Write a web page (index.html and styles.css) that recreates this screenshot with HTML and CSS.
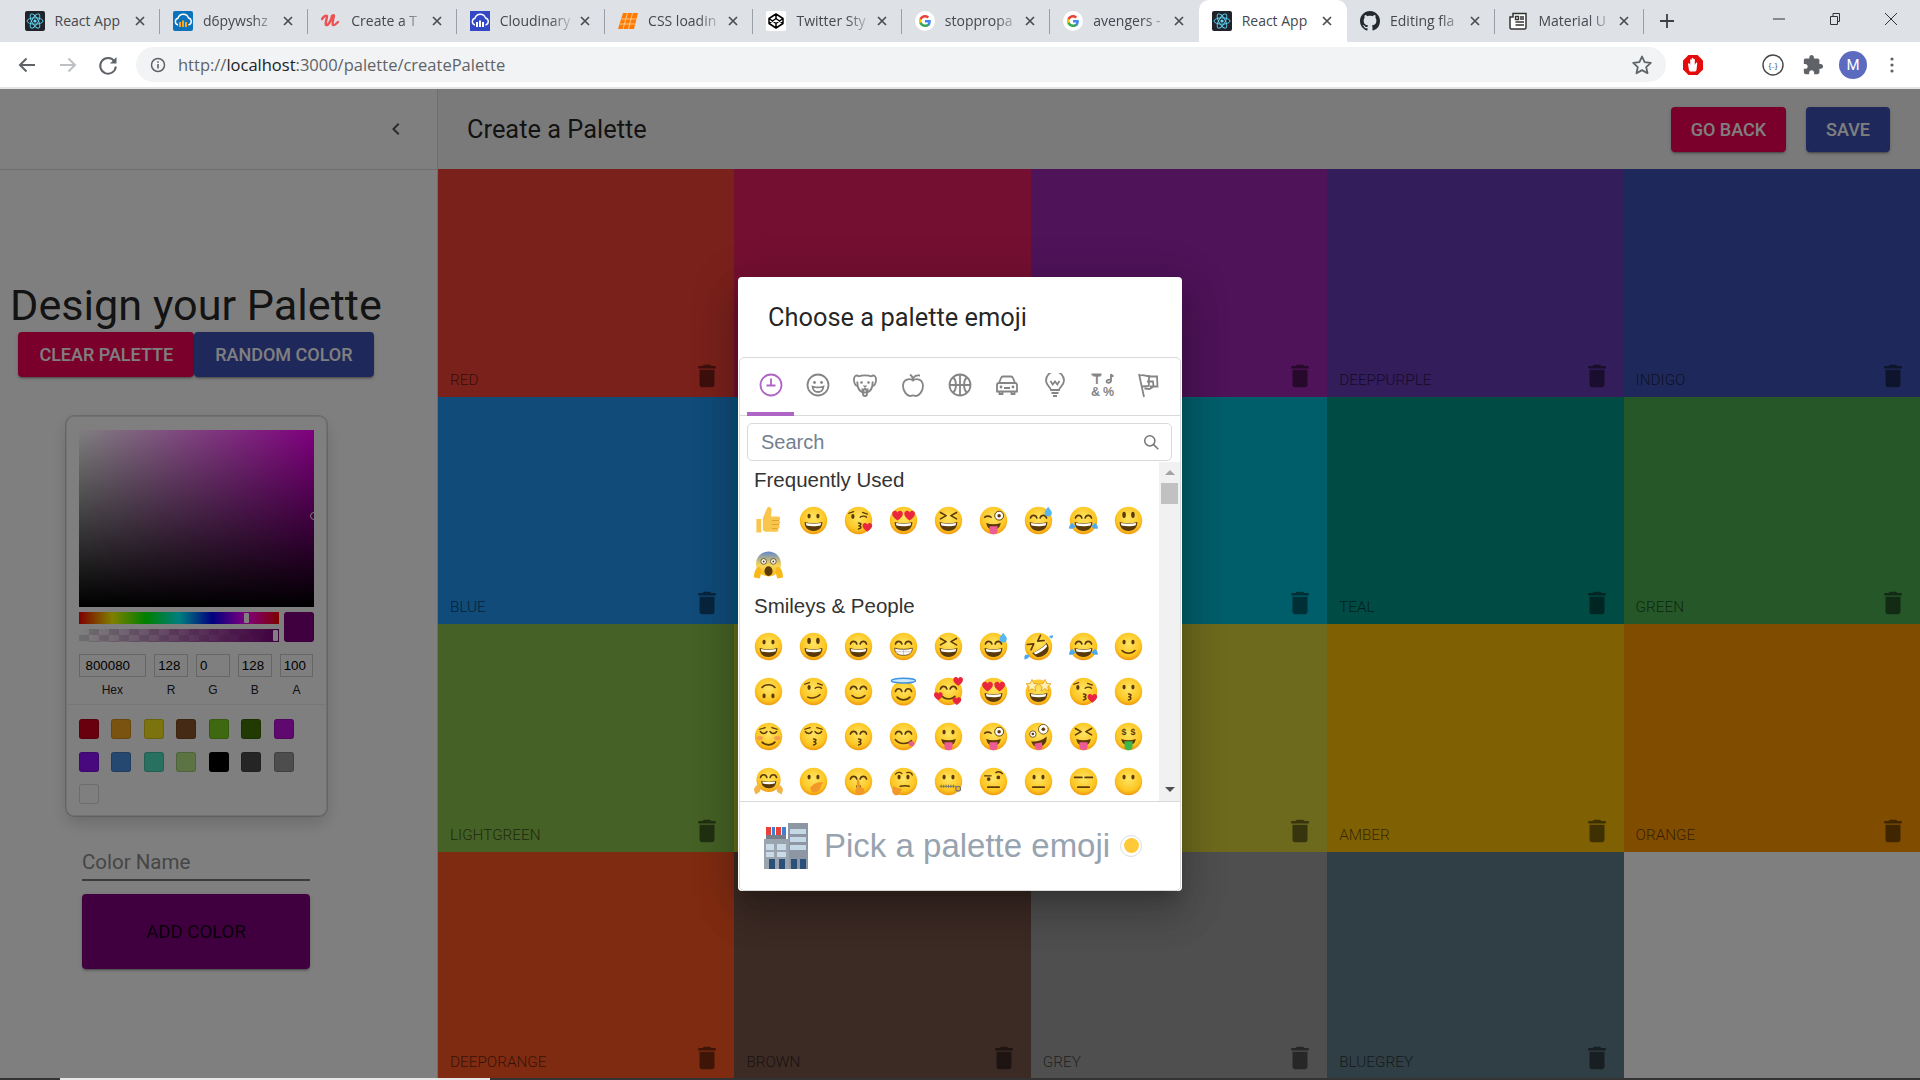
FILE: index.html
```html
<!DOCTYPE html>
<html lang="en">
<head>
<meta charset="utf-8">
<title>React App</title>
<link rel="stylesheet" href="styles.css">
</head>
<body>
<svg class="defs" aria-hidden="true">
  <defs>
    <radialGradient id="fg" cx=".5" cy=".4" r=".62"><stop offset="0" stop-color="#ffe563"/><stop offset=".72" stop-color="#fcc521"/><stop offset="1" stop-color="#ee930c"/></radialGradient>
    <linearGradient id="sg" x1="0" y1="0" x2="0" y2="1"><stop offset="0" stop-color="#5f86c9"/><stop offset=".55" stop-color="#f6d55a"/><stop offset="1" stop-color="#f9b81a"/></linearGradient>
    <path id="hp" d="M6 11C2 8 0 6 0 3.300 0 1 1.800 0 3 0c1.300 0 2.400.7 3 2 .6-1.300 1.700-2 3-2 1.200 0 3 1 3 3.300C12 6 10 8 6 11z" fill="#e8263d"/>
  </defs>
  <symbol id="b" viewBox="0 0 36 36"><circle cx="18" cy="18" r="17" fill="url(#fg)"/></symbol>
  <g id="eo" fill="#5b3a0a"><ellipse cx="12.500" cy="12.500" rx="2" ry="3"/><ellipse cx="23.500" cy="12.500" rx="2" ry="3"/></g>
  <g id="el" fill="#5b3a0a"><ellipse cx="12.500" cy="11" rx="2.200" ry="4"/><ellipse cx="23.500" cy="11" rx="2.200" ry="4"/></g>
  <path id="eh" d="M8 15c1.500-4.500 6.500-4.500 8 0M20 15c1.500-4.500 6.500-4.500 8 0" fill="none" stroke="#5b3a0a" stroke-width="2" stroke-linecap="round"/>
  <path id="ex" d="M8 8l7 4-7 4M28 8l-7 4 7 4" fill="none" stroke="#5b3a0a" stroke-width="2" stroke-linecap="round" stroke-linejoin="round"/>
  <path id="ec" d="M8 12c2 3 6 3 8 0M20 12c2 3 6 3 8 0" fill="none" stroke="#5b3a0a" stroke-width="2" stroke-linecap="round"/>
  <g id="mg"><path d="M7 20c7 2 15 2 22 0 0 7-4 11-11 11S7 27 7 20z" fill="#5b3a0a"/><path d="M8.500 21c6 1.300 13 1.300 19 0l-.8 3.200c-5 1.300-12.400 1.300-17.400 0z" fill="#fff"/></g>
  <path id="ms" d="M10 23c4 4.500 12 4.500 16 0" fill="none" stroke="#5b3a0a" stroke-width="2" stroke-linecap="round"/>
  <path id="mk" d="M18 21c4 0 4 3 0 3.500 4 .5 4 3.500 0 4" fill="none" stroke="#5b3a0a" stroke-width="1.800" stroke-linecap="round"/>
  <g id="mt"><path d="M9 21c6 2 12 2 18 0-1 6-4 8-9 8s-8-2-9-8z" fill="#5b3a0a"/><path d="M13 25h10v5a5 5 0 0 1-10 0z" fill="#ee5a94"/></g>
  <path id="mn" d="M11 25h14" fill="none" stroke="#5b3a0a" stroke-width="2.200" stroke-linecap="round"/>
  <path id="dr" d="M30 1c2 3 4.500 5 4.500 7.500a4.500 4.500 0 0 1-9 0C25.500 6 28 4 30 1z" fill="#58b6f0"/>
  <path id="tr" d="M4 21c-3 1-4 5-4 7 3 1 6 0 8-3zM32 21c3 1 4 5 4 7-3 1-6 0-8-3z" fill="#4fa9ee"/>
  <symbol id="e-thumb" viewBox="0 0 36 36"><path d="M11 15L16 3c1-3 6-2 6 2l-1 8h9c3 0 3 4 1 5 2 1 2 4 0 5 1 1 1 4-1 5 1 2 0 4-2 4H15c-2 0-4-1-4-3zM3 16h6v17H3z" fill="#f9c64d"/><path d="M22 18h9M22 23h9M22 28h7" stroke="#d99a2a" stroke-width="1" fill="none"/></symbol>
  <symbol id="e-grin" viewBox="0 0 36 36"><use href="#b"/><use href="#eo"/><use href="#mg"/></symbol>
  <symbol id="e-smiley" viewBox="0 0 36 36"><use href="#b"/><use href="#el"/><use href="#mg"/></symbol>
  <symbol id="e-smile" viewBox="0 0 36 36"><use href="#b"/><use href="#eh"/><use href="#mg"/></symbol>
  <symbol id="e-beam" viewBox="0 0 36 36"><use href="#b"/><use href="#eh"/><path d="M7 20c7 2 15 2 22 0 0 6-4 9-11 9S7 26 7 20z" fill="#fff" stroke="#5b3a0a" stroke-width="1"/><path d="M8 24.500h20M18 21v8" stroke="#a99" stroke-width=".7"/></symbol>
  <symbol id="e-xd" viewBox="0 0 36 36"><use href="#b"/><use href="#ex"/><use href="#mg"/></symbol>
  <symbol id="e-sweat" viewBox="0 0 36 36"><use href="#b"/><use href="#eh"/><use href="#mg"/><use href="#dr"/></symbol>
  <symbol id="e-rofl" viewBox="0 0 36 36"><use href="#b"/><g transform="rotate(-35 18 18)"><use href="#ex"/><use href="#mg"/></g><path d="M2 28c-2 2-2 5-1 6 3 0 5-2 6-5zM34 8c2-1 2-2 2-4-3 0-4 1-5 2z" fill="#4fa9ee"/></symbol>
  <symbol id="e-joy" viewBox="0 0 36 36"><use href="#b"/><use href="#eh"/><use href="#mg"/><use href="#tr"/></symbol>
  <symbol id="e-slight" viewBox="0 0 36 36"><use href="#b"/><use href="#eo"/><use href="#ms"/></symbol>
  <symbol id="e-upside" viewBox="0 0 36 36"><use href="#b"/><g transform="rotate(180 18 18)"><use href="#eo"/><use href="#ms"/></g></symbol>
  <symbol id="e-wink" viewBox="0 0 36 36"><use href="#b"/><ellipse cx="12.500" cy="13" rx="2" ry="3" fill="#5b3a0a"/><path d="M20 14c2-2 6-2 8 0M7 9l6-2M23 8l6 2" fill="none" stroke="#5b3a0a" stroke-width="1.600" stroke-linecap="round"/><path d="M11 25c4 2 11 1 15-3" fill="none" stroke="#5b3a0a" stroke-width="2" stroke-linecap="round"/></symbol>
  <symbol id="e-blush" viewBox="0 0 36 36"><use href="#b"/><use href="#eh"/><use href="#ms"/></symbol>
  <symbol id="e-halo" viewBox="0 0 36 36"><circle cx="18" cy="20" r="15.500" fill="url(#fg)"/><use href="#eh" transform="translate(0 3)"/><use href="#ms" transform="translate(0 2)"/><ellipse cx="18" cy="4.500" rx="15" ry="3" fill="#cfeaff" stroke="#3f94e0" stroke-width="1.800"/></symbol>
  <symbol id="e-love" viewBox="0 0 36 36"><use href="#b"/><use href="#eh"/><use href="#ms" transform="translate(0 1)"/><use href="#hp" transform="translate(24 0)"/><use href="#hp" transform="translate(0 19) scale(.9)"/><use href="#hp" transform="translate(23 25) scale(.9)"/></symbol>
  <symbol id="e-hearts" viewBox="0 0 36 36"><use href="#b"/><use href="#hp" transform="translate(4 6) scale(1.100)"/><use href="#hp" transform="translate(19 6) scale(1.100)"/><use href="#mg"/></symbol>
  <symbol id="e-star" viewBox="0 0 36 36"><circle cx="18" cy="19" r="16" fill="url(#fg)"/><use href="#mg"/><path d="M10 3l2.200 5 5.300.5-4 3.500 1.200 5.500-4.700-3-4.700 3 1.200-5.500-4-3.500 5.300-.5zM26 3l2.200 5 5.300.5-4 3.500 1.200 5.500-4.700-3-4.700 3 1.200-5.500-4-3.500 5.300-.5z" fill="#fdf0b4" stroke="#e89a12" stroke-width="1"/></symbol>
  <symbol id="e-kheart" viewBox="0 0 36 36"><use href="#b"/><ellipse cx="11" cy="13" rx="2" ry="3" fill="#5b3a0a"/><path d="M20 14c2-2 6-2 8 0M6 9l6-2M23 8l6 2" fill="none" stroke="#5b3a0a" stroke-width="1.600" stroke-linecap="round"/><use href="#mk"/><use href="#hp" transform="translate(23 21)"/></symbol>
  <symbol id="e-kiss" viewBox="0 0 36 36"><use href="#b"/><use href="#eo"/><use href="#mk"/></symbol>
  <symbol id="e-relax" viewBox="0 0 36 36"><use href="#b"/><path d="M7 9l7-2M22 7l7 2" fill="none" stroke="#5b3a0a" stroke-width="1.400" stroke-linecap="round"/><use href="#ec"/><use href="#ms" transform="translate(0 2)"/><ellipse cx="7" cy="20" rx="4" ry="2.500" fill="#f79c4c"/><ellipse cx="29" cy="20" rx="4" ry="2.500" fill="#f79c4c"/></symbol>
  <symbol id="e-kclosed" viewBox="0 0 36 36"><use href="#b"/><path d="M7 9l7-2M22 7l7 2" fill="none" stroke="#5b3a0a" stroke-width="1.400" stroke-linecap="round"/><use href="#ec"/><use href="#mk"/></symbol>
  <symbol id="e-ksmile" viewBox="0 0 36 36"><use href="#b"/><use href="#eh"/><use href="#mk"/></symbol>
  <symbol id="e-yum" viewBox="0 0 36 36"><use href="#b"/><use href="#eh"/><path d="M8 22c5 6 15 6 20 1" fill="none" stroke="#5b3a0a" stroke-width="2" stroke-linecap="round"/><ellipse cx="28" cy="27" rx="3.500" ry="3" fill="#ee5a94"/></symbol>
  <symbol id="e-tongue" viewBox="0 0 36 36"><use href="#b"/><use href="#eo"/><use href="#mt"/></symbol>
  <symbol id="e-wtongue" viewBox="0 0 36 36"><use href="#b"/><path d="M7 14c2-2 6-2 8 0" fill="none" stroke="#5b3a0a" stroke-width="2" stroke-linecap="round"/><circle cx="25" cy="12" r="5.500" fill="#fff" stroke="#5b3a0a" stroke-width="1.200"/><circle cx="25" cy="12" r="2.200" fill="#5b3a0a"/><use href="#mt"/></symbol>
  <symbol id="e-zany" viewBox="0 0 36 36"><use href="#b"/><circle cx="11" cy="15" r="4" fill="#fff" stroke="#5b3a0a"/><circle cx="11" cy="15" r="1.600" fill="#5b3a0a"/><circle cx="24" cy="9" r="6" fill="#fff" stroke="#5b3a0a"/><circle cx="24" cy="9" r="2.200" fill="#5b3a0a"/><path d="M9 24c6 1 14-1 19-6 1 8-4 12-9 13-6 1-9-3-10-7z" fill="#5b3a0a"/><path d="M13 27l9-2 1 6c0 4-8 5-9 1z" fill="#ee5a94"/></symbol>
  <symbol id="e-stongue" viewBox="0 0 36 36"><use href="#b"/><use href="#ex"/><use href="#mt"/></symbol>
  <symbol id="e-money" viewBox="0 0 36 36"><use href="#b"/><path d="M9 21c6 2 12 2 18 0-1 6-4 7-9 7s-8-1-9-7z" fill="#5b3a0a"/><path d="M13 24h10v6a5 5 0 0 1-10 0z" fill="#3fb54a"/></symbol>
  <symbol id="e-hug" viewBox="0 0 36 36"><circle cx="18" cy="16" r="15" fill="url(#fg)"/><use href="#eh" transform="translate(0 -2)"/><use href="#mg" transform="translate(3 0) scale(.85)"/><path d="M0 29c0-5 5-8 7-5 2 2 1 5 0 7l-5 3zM36 29c0-5-5-8-7-5-2 2-1 5 0 7l5 3z" fill="#f4b44a"/></symbol>
  <symbol id="e-hand" viewBox="0 0 36 36"><use href="#b"/><use href="#eo"/><path d="M14 26c3-5 9-8 15-7 2 1 0 3-2 3 2 2 0 3-1 4 0 3-2 4-4 5-4 2-7 0-8-5z" fill="#f0982a"/></symbol>
  <symbol id="e-shush" viewBox="0 0 36 36"><use href="#b"/><use href="#eh"/><ellipse cx="18" cy="24" rx="3" ry="2" fill="#5b3a0a"/><path d="M16 17c0-2 3-2 3 0l1 8c3 0 6 2 5 5-1 5-8 6-10 2-2-3 0-5 1-7z" fill="#f0982a"/></symbol>
  <symbol id="e-think" viewBox="0 0 36 36"><use href="#b"/><path d="M8 9c2-3 6-3 8-1M22 7c3-1 6 0 7 3" fill="none" stroke="#5b3a0a" stroke-width="1.600" stroke-linecap="round"/><use href="#eo"/><path d="M14 24c4-1 8-1 11 0" fill="none" stroke="#5b3a0a" stroke-width="2" stroke-linecap="round"/><path d="M6 24c2 2 6 2 9 3 2 1 0 3-1 3 0 3-2 6-6 5-4-2-5-6-3-10z" fill="#f0982a"/></symbol>
  <symbol id="e-zip" viewBox="0 0 36 36"><use href="#b"/><use href="#eo"/><path d="M7 24h21M9 22v4M12 22v4M15 22v4M18 22v4M21 22v4M24 22v4" stroke="#6a6a6a" stroke-width="1" fill="none"/><circle cx="30" cy="27" r="3" fill="none" stroke="#777" stroke-width="1.500"/></symbol>
  <symbol id="e-brow" viewBox="0 0 36 36"><use href="#b"/><path d="M7 11h8M21 7c3-2 6-1 8 1" fill="none" stroke="#5b3a0a" stroke-width="1.800" stroke-linecap="round"/><circle cx="12" cy="15" r="2.300" fill="#5b3a0a"/><circle cx="24" cy="13" r="2.300" fill="#5b3a0a"/><use href="#mn"/></symbol>
  <symbol id="e-neutral" viewBox="0 0 36 36"><use href="#b"/><use href="#eo"/><use href="#mn"/></symbol>
  <symbol id="e-expr" viewBox="0 0 36 36"><use href="#b"/><path d="M7 13h9M20 13h9" fill="none" stroke="#5b3a0a" stroke-width="2.200" stroke-linecap="round"/><use href="#mn"/></symbol>
  <symbol id="e-nomouth" viewBox="0 0 36 36"><use href="#b"/><use href="#eo"/></symbol>
  <symbol id="e-scream" viewBox="0 0 36 36"><circle cx="18" cy="16" r="15.500" fill="url(#sg)"/><circle cx="12" cy="13" r="3.500" fill="#fff" stroke="#5b3a0a"/><circle cx="24" cy="13" r="3.500" fill="#fff" stroke="#5b3a0a"/><circle cx="12" cy="13" r="1.200" fill="#5b3a0a"/><circle cx="24" cy="13" r="1.200" fill="#5b3a0a"/><ellipse cx="18" cy="25" rx="5" ry="6" fill="#5b3a0a"/><path d="M0 33c0-8 3-13 7-13 3 2 2 9 0 14zM36 33c0-8-3-13-7-13-3 2-2 9 0 14z" fill="#f9b81a"/></symbol>
  <symbol id="e-store" viewBox="0 0 44 46"><rect x="24" y="0" width="20" height="46" fill="#8c97a3"/><path d="M26 6h16v5H26zM26 14h16v5H26zM26 22h16v5H26z" fill="#c4d8e8"/><path d="M27 36h6v10h-6zM36 36h6v10h-6z" fill="#2a4f78"/><rect x="0" y="16" width="25" height="30" fill="#9aa4ae"/><path d="M2 21h8v6H2zM13 21h9v6h-9zM2 29h8v5H2zM13 29h9v5h-9z" fill="#c9dbe9"/><path d="M5 36h6v10H5zM15 36h6v10h-6z" fill="#2a4f78"/><rect x="2" y="4" width="20" height="8" fill="#fff"/><path d="M2 4h5v8H2zM12 4h5v8h-5z" fill="#e8413a"/><path d="M8 4h3v8H8zM18 4h4v8h-4z" fill="#3f7fd0"/><rect x="2" y="12" width="20" height="4" fill="#747f8a"/></symbol>
  <symbol id="react" viewBox="0 0 20 20"><rect width="20" height="20" rx="2" fill="#20232a"/><g fill="none" stroke="#61dafb" stroke-width=".9"><ellipse cx="10" cy="10" rx="8" ry="3.200"/><ellipse cx="10" cy="10" rx="8" ry="3.200" transform="rotate(60 10 10)"/><ellipse cx="10" cy="10" rx="8" ry="3.200" transform="rotate(120 10 10)"/></g><circle cx="10" cy="10" r="1.600" fill="#61dafb"/></symbol>
  <symbol id="cloudbars" viewBox="0 0 20 20"><path d="M5 14a3.500 3.500 0 0 1 0-6.800A5.500 5.500 0 0 1 15.500 7a3.600 3.600 0 0 1 0 7" fill="none" stroke="#fff" stroke-width="1.400"/><path d="M6 11h2v5H6zM9 9.500h2V16H9zM12 11h2v5h-2z" fill="currentColor"/></symbol>
  <symbol id="google" viewBox="0 0 20 20"><circle cx="10" cy="10" r="10" fill="#fff"/><path d="M15.800 10.200c0-.5 0-.9-.1-1.300H10v2.500h3.300c-.2.800-.6 1.400-1.200 1.900v1.600h2c1.100-1.100 1.700-2.700 1.700-4.700z" fill="#4285f4"/><path d="M10 16c1.600 0 3-.5 4.100-1.500l-2-1.600c-.6.400-1.300.6-2.100.6-1.600 0-3-1.100-3.500-2.500h-2V12.600C5.500 14.700 7.600 16 10 16z" fill="#34a853"/><path d="M6.500 11c-.3-.7-.3-1.400 0-2.100V7.300h-2c-.7 1.500-.7 3.800 0 5.300z" fill="#fbbc05"/><path d="M10 6.500c.9 0 1.700.3 2.400.9l1.700-1.700C13 4.600 11.600 4 10 4 7.600 4 5.500 5.300 4.500 7.300l2 1.600C7 7.600 8.400 6.500 10 6.500z" fill="#ea4335"/></symbol>
  <symbol id="x" viewBox="0 0 10 10"><path d="M1 1l8 8M9 1l-8 8" stroke="#4a4d52" stroke-width="1.700" fill="none"/></symbol>
  <symbol id="trash" viewBox="0 0 24 24"><path d="M6 19c0 1.100.9 2 2 2h8c1.100 0 2-.9 2-2V7H6v12zM19 4h-3.500l-1-1h-5l-1 1H5v2h14V4z"/></symbol>
</svg>

<header class="chrome">
  <div class="tabstrip">
    <div class="tab sep"><svg class="fav"><use href="#react"/></svg><span class="tab-title tab-title-full">React App</span><svg class="tab-x"><use href="#x"/></svg></div>
    <div class="tab sep"><svg class="fav fav-cl1" viewBox="0 0 20 20"><rect width="20" height="20" rx="2" fill="#0c72ba"/><use href="#cloudbars" width="20" height="20"/></svg><span class="tab-title">d6pywshz</span><svg class="tab-x"><use href="#x"/></svg></div>
    <div class="tab sep"><svg class="fav" viewBox="0 0 20 20"><path d="M1 8c2-3 4-4 5-3 0 3-2 6-1 9 2 1 5-4 6-9 1-1 2-1 2 0-1 4-2 7-1 9 1 1 3-1 5-3" fill="none" stroke="#ec5252" stroke-width="2.400" stroke-linecap="round"/></svg><span class="tab-title">Create a T</span><svg class="tab-x"><use href="#x"/></svg></div>
    <div class="tab sep"><svg class="fav fav-cl2" viewBox="0 0 20 20"><rect width="20" height="20" fill="#3448c5"/><use href="#cloudbars" width="20" height="20"/></svg><span class="tab-title">Cloudinary</span><svg class="tab-x"><use href="#x"/></svg></div>
    <div class="tab sep"><svg class="fav" viewBox="0 0 20 20"><path d="M5 2h15l-4 16H0z" fill="#ff7a00"/><path d="M9.500 2L5 18M14.500 2L10.500 18M3.500 8h15M2 13h15" stroke="#ffd9a8" stroke-width=".8" fill="none"/></svg><span class="tab-title">CSS loadin</span><svg class="tab-x"><use href="#x"/></svg></div>
    <div class="tab sep"><svg class="fav" viewBox="0 0 20 20"><rect width="20" height="20" rx="2" fill="#fff"/><path d="M10 3l7 4.500v5L10 17l-7-4.500v-5zM10 3v4.500M10 12.500V17M3 7.500l7 5 7-5M3 12.500l7-5 7 5" fill="none" stroke="#000" stroke-width="1.500" stroke-linejoin="round"/></svg><span class="tab-title">Twitter Sty</span><svg class="tab-x"><use href="#x"/></svg></div>
    <div class="tab sep"><svg class="fav"><use href="#google"/></svg><span class="tab-title">stoppropa</span><svg class="tab-x"><use href="#x"/></svg></div>
    <div class="tab"><svg class="fav"><use href="#google"/></svg><span class="tab-title">avengers -</span><svg class="tab-x"><use href="#x"/></svg></div>
    <div class="tab active"><svg class="fav"><use href="#react"/></svg><span class="tab-title tab-title-full">React App</span><svg class="tab-x"><use href="#x"/></svg></div>
    <div class="tab sep"><svg class="fav" viewBox="0 0 16 16"><path fill="#24292e" d="M8 0C3.580 0 0 3.580 0 8c0 3.540 2.290 6.530 5.470 7.590.4.070.55-.17.55-.38 0-.19-.01-.82-.01-1.490-2.010.37-2.530-.49-2.690-.94-.09-.23-.48-.94-.82-1.130-.28-.15-.68-.52-.01-.53.630-.01 1.080.58 1.230.82.720 1.210 1.870.87 2.330.66.070-.52.280-.87.510-1.070-1.780-.2-3.640-.89-3.640-3.950 0-.87.310-1.590.820-2.150-.08-.2-.36-1.020.08-2.120 0 0 .67-.21 2.200.82.640-.18 1.320-.27 2-.27s1.360.09 2 .27c1.530-1.040 2.200-.82 2.200-.82.440 1.100.16 1.920.08 2.120.51.560.82 1.270.82 2.150 0 3.070-1.870 3.750-3.650 3.950.29.250.54.730.54 1.480 0 1.070-.01 1.930-.01 2.200 0 .21.150.46.55.38A8.010 8.010 0 0 0 16 8c0-4.420-3.580-8-8-8z"/></svg><span class="tab-title">Editing fla</span><svg class="tab-x"><use href="#x"/></svg></div>
    <div class="tab sep"><svg class="fav" viewBox="0 0 20 20"><path d="M5 2.500h13v14a1.500 1.500 0 0 1-1.500 1.500h-13A1.500 1.500 0 0 1 2 16.500V6h3z" fill="#fff" stroke="#333" stroke-width="1.500"/><path d="M7.500 5.500h3v3h-3zM12 6h4M12 8h4M7.500 11h8.500M7.500 14h8.500" stroke="#333" stroke-width="1.400" fill="none"/></svg><span class="tab-title">Material U</span><svg class="tab-x"><use href="#x"/></svg></div>
    <svg class="newtab" viewBox="0 0 16 16"><path d="M8 1v14M1 8h14" stroke="#3c4043" stroke-width="1.800"/></svg>
    <div class="winctl">
      <svg class="wc" viewBox="0 0 14 14"><path d="M1 7h12" stroke="#333" stroke-width="1"/></svg>
      <svg class="wc" viewBox="0 0 14 14"><path d="M2.500 4.500h7v8h-7zM5 4.500V1.500h6.500v8h-2" fill="none" stroke="#333" stroke-width="1"/></svg>
      <svg class="wc" viewBox="0 0 14 14"><path d="M1 1l12 12M13 1L1 13" stroke="#333" stroke-width="1"/></svg>
    </div>
  </div>
  <div class="toolbar">
    <svg class="tb tb-first" viewBox="0 0 24 24"><path d="M20 12H5M11.500 5.500L5 12l6.500 6.500" fill="none" stroke="#5f6368" stroke-width="2"/></svg>
    <svg class="tb" viewBox="0 0 24 24"><path d="M4 12h15M12.500 5.500L19 12l-6.500 6.500" fill="none" stroke="#bdc1c6" stroke-width="2"/></svg>
    <svg class="tb" viewBox="0 0 24 24"><path d="M18.500 8.500a7.800 7.800 0 1 0 1.300 5" fill="none" stroke="#5f6368" stroke-width="2"/><path d="M20.500 4v6.500H14z" fill="#5f6368"/></svg>
    <div class="omnibox">
      <svg class="omni-info" viewBox="0 0 16 16"><circle cx="8" cy="8" r="6.500" fill="none" stroke="#5f6368" stroke-width="1.500"/><path d="M8 7v4.500M8 4.200v1.500" stroke="#5f6368" stroke-width="1.600"/></svg>
      <span class="url">http://<b class="url-host">localhost</b>:3000/palette/createPalette</span>
      <svg class="omni-star" viewBox="0 0 24 24"><path d="M12 3.500l2.600 5.700 6.200.7-4.600 4.200 1.300 6.100L12 17.100l-5.500 3.100 1.300-6.100-4.600-4.200 6.200-.7z" fill="none" stroke="#5f6368" stroke-width="1.800" stroke-linejoin="round"/></svg>
    </div>
    <svg class="ext-stop" viewBox="0 0 24 24"><path d="M7.500 2h9L22 7.500v9L16.500 22h-9L2 16.500v-9z" fill="#e60b0b"/><path d="M8 17l-1-6c0-1 1.500-1 1.700 0l.5 1V7c0-1 1.300-1 1.500 0v4-5.500c0-1 1.500-1 1.600 0V11V6.500c0-1 1.500-1 1.500 0V12l1-2c.5-1 1.700-.5 1.400.5L15.500 17c-.5 1-1 1.500-2 1.500H10c-1 0-1.700-.5-2-1.500z" fill="#fff"/></svg>
    <svg class="ext-code" viewBox="0 0 24 24"><circle cx="12" cy="12" r="10" fill="#fff" stroke="#444" stroke-width="1.400"/><text class="ext-code-t" x="12" y="15" text-anchor="middle">{..}</text></svg>
    <svg class="ext-puzzle" viewBox="0 0 24 24"><path fill="#5f6368" d="M20.500 11H19V7c0-1.100-.9-2-2-2h-4V3.500C13 2.120 11.880 1 10.500 1S8 2.120 8 3.500V5H4c-1.100 0-1.990.9-1.990 2v3.800H3.500c1.490 0 2.700 1.210 2.700 2.700s-1.210 2.700-2.700 2.700H2V20c0 1.100.9 2 2 2h3.800v-1.500c0-1.490 1.210-2.700 2.700-2.700 1.490 0 2.700 1.210 2.700 2.700V22H17c1.100 0 2-.9 2-2v-4h1.500c1.380 0 2.500-1.120 2.500-2.500S21.880 11 20.500 11z"/></svg>
    <span class="avatar">M</span>
    <svg class="ext-dots" viewBox="0 0 4 16"><circle cx="2" cy="2" r="1.600" fill="#5f6368"/><circle cx="2" cy="8" r="1.600" fill="#5f6368"/><circle cx="2" cy="14" r="1.600" fill="#5f6368"/></svg>
  </div>
</header>

<main class="page">
  <aside class="sidebar">
    <div class="side-head">
      <svg class="chev" viewBox="0 0 24 24"><path d="M15.410 7.410L14 6l-6 6 6 6 1.410-1.410L10.830 12z"/></svg>
    </div>
    <div class="side-body">
      <h1 class="side-title">Design your Palette</h1>
      <div class="side-actions">
        <button class="btn btn-pink">CLEAR PALETTE</button>
        <button class="btn btn-indigo">RANDOM COLOR</button>
      </div>
      <div class="sketch">
        <div class="sat"><span class="sat-pointer"></span></div>
        <div class="sliders">
          <div class="slider-col">
            <div class="hue"><span class="thumb thumb-hue"></span></div>
            <div class="alpha"><span class="thumb thumb-alpha"></span></div>
          </div>
          <div class="current"></div>
        </div>
        <div class="fields">
          <label class="field field-hex"><span class="field-box">800080</span><span class="field-label">Hex</span></label>
          <label class="field"><span class="field-box">128</span><span class="field-label">R</span></label>
          <label class="field"><span class="field-box">0</span><span class="field-label">G</span></label>
          <label class="field"><span class="field-box">128</span><span class="field-label">B</span></label>
          <label class="field"><span class="field-box">100</span><span class="field-label">A</span></label>
        </div>
        <div class="presets">
          <span class="pre p1"></span><span class="pre p2"></span><span class="pre p3"></span><span class="pre p4"></span><span class="pre p5"></span><span class="pre p6"></span><span class="pre p7"></span>
          <span class="pre p8"></span><span class="pre p9"></span><span class="pre p10"></span><span class="pre p11"></span><span class="pre p12"></span><span class="pre p13"></span><span class="pre p14"></span>
          <span class="pre p15"></span>
        </div>
      </div>
      <div class="name-field">Color Name</div>
      <button class="add-color">ADD COLOR</button>
    </div>
  </aside>
  <section class="content">
    <div class="appbar">
      <h2 class="appbar-title">Create a Palette</h2>
      <button class="btn btn-pink btn-bar">GO BACK</button>
      <button class="btn btn-indigo btn-bar">SAVE</button>
    </div>
    <div class="grid">
      <div class="tile c-red"><span>RED</span><svg class="del"><use href="#trash"/></svg></div>
      <div class="tile c-pink"><span></span><svg class="del"><use href="#trash"/></svg></div>
      <div class="tile c-purple"><span></span><svg class="del"><use href="#trash"/></svg></div>
      <div class="tile c-dpurple"><span>DEEPPURPLE</span><svg class="del"><use href="#trash"/></svg></div>
      <div class="tile c-indigo"><span>INDIGO</span><svg class="del"><use href="#trash"/></svg></div>
      <div class="tile c-blue"><span>BLUE</span><svg class="del"><use href="#trash"/></svg></div>
      <div class="tile c-lblue"><span></span><svg class="del"><use href="#trash"/></svg></div>
      <div class="tile c-cyan"><span></span><svg class="del"><use href="#trash"/></svg></div>
      <div class="tile c-teal"><span>TEAL</span><svg class="del"><use href="#trash"/></svg></div>
      <div class="tile c-green"><span>GREEN</span><svg class="del"><use href="#trash"/></svg></div>
      <div class="tile c-lgreen"><span>LIGHTGREEN</span><svg class="del"><use href="#trash"/></svg></div>
      <div class="tile c-lime"><span></span><svg class="del"><use href="#trash"/></svg></div>
      <div class="tile c-yellow"><span></span><svg class="del"><use href="#trash"/></svg></div>
      <div class="tile c-amber"><span>AMBER</span><svg class="del"><use href="#trash"/></svg></div>
      <div class="tile c-orange"><span>ORANGE</span><svg class="del"><use href="#trash"/></svg></div>
      <div class="tile c-dorange"><span>DEEPORANGE</span><svg class="del"><use href="#trash"/></svg></div>
      <div class="tile c-brown"><span>BROWN</span><svg class="del"><use href="#trash"/></svg></div>
      <div class="tile c-grey"><span>GREY</span><svg class="del"><use href="#trash"/></svg></div>
      <div class="tile c-bgrey"><span>BLUEGREY</span><svg class="del"><use href="#trash"/></svg></div>
    </div>
  </section>

  <div class="backdrop">
    <div class="dialog">
      <h3 class="dialog-title">Choose a palette emoji</h3>
      <div class="picker">
        <nav class="anchors">
          <span class="anchor on"><svg viewBox="0 0 24 24"><circle cx="12" cy="12" r="10.500"/><path d="M12 5.500v8M7.500 12.500h9"/></svg></span>
          <span class="anchor"><svg viewBox="0 0 24 24"><circle cx="12" cy="12" r="10.500"/><circle class="fill" cx="8.500" cy="9.500" r="1.400"/><circle class="fill" cx="15.500" cy="9.500" r="1.400"/><path d="M6.500 13.500c3 1 8 1 11 0-.5 4-3 5.500-5.500 5.500s-5-1.500-5.500-5.500z"/></svg></span>
          <span class="anchor"><svg viewBox="0 0 24 24"><path d="M6 3.500C8 2 16 2 18 3.500M6 3.500C3 1 .5 3.500 1 7.500c.3 2.500 1.500 5 3 5.500M18 3.500C21 1 23.500 3.500 23 7.500c-.3 2.500-1.500 5-3 5.500M4.300 8.500c0 7 2.700 11 7.700 11s7.700-4 7.700-11"/><circle class="fill" cx="8.500" cy="9.500" r="1.300"/><circle class="fill" cx="15.500" cy="9.500" r="1.300"/><path class="fill" d="M9.800 12.500h4.400L12 15z"/><path d="M12 15v1.500M8.500 16.500h7M10 16.500v4.500a2 2 0 0 0 4 0v-4.500"/></svg></span>
          <span class="anchor"><svg viewBox="0 0 24 24"><path d="M12 7.500C9 5 2 6 2 13c0 5 4 10 7 10 1.500 0 2-.7 3-.7s1.500.7 3 .7c3 0 7-5 7-10 0-7-7-8-10-5.500z"/><path d="M12 7C12 4 10.500 2.500 9 1.500M12 6c1-3 4-4 7-3.500"/></svg></span>
          <span class="anchor"><svg viewBox="0 0 24 24"><circle cx="12" cy="12" r="10.500"/><path d="M12 1.500v21M1.500 12h21M5 4c4 4 4 12 0 16M19 4c-4 4-4 12 0 16"/></svg></span>
          <span class="anchor"><svg viewBox="0 0 24 24"><path d="M4 10L6 5c.4-1 1-1.500 2-1.500h8c1 0 1.600.5 2 1.500l2 5M2 12c0-1.200.8-2 2-2h16c1.200 0 2 .8 2 2v6.500H2zM4.500 18.500V21h3v-2.500M16.500 18.500V21h3v-2.500M9 15h6"/><circle class="fill" cx="6" cy="14" r="1.400"/><circle class="fill" cx="18" cy="14" r="1.400"/></svg></span>
          <span class="anchor"><svg viewBox="0 0 24 24"><path d="M8 17c0-3-5-4-5-9.500a9 9 0 0 1 18 0c0 5.500-5 6.500-5 9.500zM8.500 20h7M10 23h4M7.500 8l2.200 3.500 2.300-3 2.300 3 2.200-3.500"/></svg></span>
          <span class="anchor"><svg viewBox="0 0 24 24"><path d="M1.500 1.500h10M21 1v7c-.3 2-4.500 2.500-4.500.5 0-1.800 3-2.300 4.500-1.500M21 1c.5 1.500 1.500 2 2.500 2.500"/><text class="sym" x="3" y="11">T</text><text class="sym" x="1" y="23">&amp;</text><text class="sym" x="13" y="23">%</text></svg></span>
          <span class="anchor"><svg viewBox="0 0 24 24"><path d="M2 1l5 23M3 2.500c4-1.500 6 1 9 .5l-.2 10c-2 .5-4 0-6.800 .5M12 3.500h8l.5 10H13M10 8.500h6l.5 5-4 2.500-5-.5"/></svg></span>
        </nav>
        <div class="search"><span class="search-ph">Search</span><svg class="search-ic" viewBox="0 0 20 20"><circle cx="8" cy="8" r="6"/><path d="M12.500 12.500L18 18"/></svg></div>
        <div class="scroll">
          <div class="scroll-list">
            <div class="cat">Frequently Used</div>
            <div class="emojis">
              <svg class="em"><use href="#e-thumb"/></svg><svg class="em"><use href="#e-grin"/></svg><svg class="em"><use href="#e-kheart"/></svg><svg class="em"><use href="#e-hearts"/></svg><svg class="em"><use href="#e-xd"/></svg><svg class="em"><use href="#e-wtongue"/></svg><svg class="em"><use href="#e-sweat"/></svg><svg class="em"><use href="#e-joy"/></svg><svg class="em"><use href="#e-smiley"/></svg>
              <svg class="em"><use href="#e-scream"/></svg>
            </div>
            <div class="cat">Smileys &amp; People</div>
            <div class="emojis">
              <svg class="em"><use href="#e-grin"/></svg><svg class="em"><use href="#e-smiley"/></svg><svg class="em"><use href="#e-smile"/></svg><svg class="em"><use href="#e-beam"/></svg><svg class="em"><use href="#e-xd"/></svg><svg class="em"><use href="#e-sweat"/></svg><svg class="em"><use href="#e-rofl"/></svg><svg class="em"><use href="#e-joy"/></svg><svg class="em"><use href="#e-slight"/></svg>
              <svg class="em"><use href="#e-upside"/></svg><svg class="em"><use href="#e-wink"/></svg><svg class="em"><use href="#e-blush"/></svg><svg class="em"><use href="#e-halo"/></svg><svg class="em"><use href="#e-love"/></svg><svg class="em"><use href="#e-hearts"/></svg><svg class="em"><use href="#e-star"/></svg><svg class="em"><use href="#e-kheart"/></svg><svg class="em"><use href="#e-kiss"/></svg>
              <svg class="em"><use href="#e-relax"/></svg><svg class="em"><use href="#e-kclosed"/></svg><svg class="em"><use href="#e-ksmile"/></svg><svg class="em"><use href="#e-yum"/></svg><svg class="em"><use href="#e-tongue"/></svg><svg class="em"><use href="#e-wtongue"/></svg><svg class="em"><use href="#e-zany"/></svg><svg class="em"><use href="#e-stongue"/></svg><svg class="em" viewBox="0 0 36 36"><use href="#e-money" width="36" height="36"/><text class="dol" x="12.500" y="16" text-anchor="middle">$</text><text class="dol" x="23.500" y="16" text-anchor="middle">$</text></svg>
              <svg class="em"><use href="#e-hug"/></svg><svg class="em"><use href="#e-hand"/></svg><svg class="em"><use href="#e-shush"/></svg><svg class="em"><use href="#e-think"/></svg><svg class="em"><use href="#e-zip"/></svg><svg class="em"><use href="#e-brow"/></svg><svg class="em"><use href="#e-neutral"/></svg><svg class="em"><use href="#e-expr"/></svg><svg class="em"><use href="#e-nomouth"/></svg>
            </div>
          </div>
          <div class="vbar">
            <span class="arrow-up"></span>
            <span class="vthumb"></span>
            <span class="arrow-down"></span>
          </div>
        </div>
        <div class="preview">
          <svg class="preview-em"><use href="#e-store"/></svg>
          <span class="preview-text">Pick a palette emoji</span>
          <span class="skin"><span class="skin-dot"></span></span>
        </div>
      </div>
    </div>
  </div>
</main>
<div class="hscroll"></div>
</body>
</html>
```

FILE: styles.css
```css
* { box-sizing: border-box; }
html, body { margin: 0; height: 100%; overflow: hidden; }
body { display: flex; flex-direction: column; font-family: Roboto, "Liberation Sans", sans-serif; background: #fff; }
.defs { display: block; width: 0; height: 0; }

/* browser chrome */
.chrome { flex: none; height: 89px; background: #fff; border-bottom: 2px solid #e4e4e4; }
.tabstrip { display: flex; align-items: center; height: 42px; background: #dee1e6; padding-left: 11.5px; }
.tab { flex: none; width: 148.4px; height: 42px; padding: 0 15px 0 13px; display: flex; align-items: center; position: relative; }
.tab.sep::after { content: ""; position: absolute; right: 0; top: 9px; height: 25px; width: 1px; background: #9aa0a6; }
.tab.active { background: #fff; border-radius: 10px 10px 0 0; }
.fav { flex: none; width: 20px; height: 20px; margin-right: 10px; }
.fav-cl1 { color: #f5a623; }
.fav-cl2 { color: #fff; }
.tab-title { flex: 1; min-width: 0; overflow: hidden; white-space: nowrap; font: 14px/18px "Open Sans", sans-serif; padding-bottom: 1px; color: #45484c; -webkit-mask-image: linear-gradient(to right, #000 70%, rgba(0,0,0,.15) 100%); mask-image: linear-gradient(to right, #000 70%, rgba(0,0,0,.15) 100%); }
.tab-title-full { -webkit-mask-image: none; mask-image: none; }
.tab-x { flex: none; width: 10px; height: 10px; margin-left: 8px; }
.newtab { flex: none; width: 16px; height: 16px; margin-left: 15px; }
.winctl { margin-left: auto; display: flex; gap: 42px; padding-right: 22px; padding-bottom: 4px; }
.wc { width: 14px; height: 14px; }

.toolbar { display: flex; align-items: center; height: 45px; padding-left: 15px; }
.tb { flex: none; width: 24px; height: 24px; margin-right: 17px; }
.tb:nth-child(2) { margin-right: 16px; }
.tb:nth-child(3) { margin-right: 16px; }
.omnibox { flex: none; width: 1530px; height: 35px; border-radius: 18px; background: #f1f3f4; display: flex; align-items: center; padding: 0 12px 0 14px; }
.omni-info { flex: none; width: 16px; height: 16px; margin-right: 12px; }
.url { flex: 1; font: 16.500px "Open Sans", sans-serif; color: #5f6368; }
.url-host { font-weight: 400; color: #202124; }
.omni-star { flex: none; width: 24px; height: 24px; }
.ext-stop { flex: none; width: 24px; height: 24px; margin-left: 15px; }
.ext-code { flex: none; width: 24px; height: 24px; margin-left: 56px; }
.ext-code-t { font: 7px "Liberation Sans", sans-serif; fill: #333; }
.ext-puzzle { flex: none; width: 22px; height: 22px; margin-left: 17px; }
.avatar { flex: none; width: 28px; height: 28px; border-radius: 50%; margin-left: 15px; background: #5c6bc0; color: #fff; font-size: 15px; display: flex; align-items: center; justify-content: center; }
.ext-dots { flex: none; width: 4px; height: 16px; margin-left: 23px; }

/* page */
.page { flex: 1; min-height: 0; display: flex; position: relative; overflow: hidden; background: #fff; }
.sidebar { flex: none; width: 438px; border-right: 1px solid #dcdcdc; display: flex; flex-direction: column; }
.side-head { flex: none; height: 81px; border-bottom: 1px solid #dcdcdc; display: flex; align-items: center; justify-content: flex-end; padding-right: 29px; }
.chev { width: 24px; height: 24px; fill: #555; }
.side-body { width: 392px; display: flex; flex-direction: column; align-items: center; padding-top: 109px; }
.side-title { margin: 0; font-size: 43.200px; font-weight: 400; line-height: 53px; white-space: nowrap; color: rgba(0,0,0,.87); }
.side-actions { display: flex; }
.btn { border: 0; height: 45px; padding: 0 21px; border-radius: 4px; font: 500 18px Roboto, sans-serif; color: #fff; text-transform: uppercase; box-shadow: 0 3px 1px -2px rgba(0,0,0,.2), 0 2px 2px 0 rgba(0,0,0,.14), 0 1px 5px 0 rgba(0,0,0,.12); }
.btn-bar { padding: 0 20px; }
.btn-pink { background: #f50057; }
.btn-indigo { background: #3f51b5; }

.sketch { width: 261px; height: 400px; margin-top: 39px; padding: 13px 12px 0; background: #fff; border: 1px solid #e4e4e4; border-radius: 8px; box-shadow: 0 8px 16px rgba(0,0,0,.15), 0 0 0 1px rgba(0,0,0,.15); display: flex; flex-direction: column; }
.sat { flex: none; height: 177px; position: relative; overflow: hidden; background: linear-gradient(to top, #000, transparent), linear-gradient(to right, #fff, #f0f); }
.sat-pointer { position: absolute; right: -4px; top: 82px; width: 8px; height: 8px; border: 1.500px solid #fff; border-radius: 50%; }
.sliders { display: flex; gap: 5px; margin-top: 5px; }
.slider-col { flex: 1; display: flex; flex-direction: column; gap: 5px; }
.hue { height: 12px; position: relative; background: linear-gradient(to right, #f00, #ff0, #0f0, #0ff, #00f, #f0f, #f00); }
.alpha { height: 13px; position: relative; background: linear-gradient(to right, transparent, #800080), repeating-conic-gradient(#ddd 0 25%, #fff 0 50%) 0 0 / 20px 12px; }
.thumb { position: absolute; top: 1px; width: 5px; height: calc(100% - 2px); background: #fff; border-radius: 1px; }
.thumb-hue { left: 165px; }
.thumb-alpha { right: 1px; }
.current { flex: none; width: 30px; height: 30px; border-radius: 3px; background: #800080; }
.fields { display: flex; gap: 8px; margin-top: 12px; }
.field { flex: 1; min-width: 0; display: flex; flex-direction: column; align-items: stretch; }
.field-hex { flex: 2; }
.field-box { height: 23px; border: 1px solid #ccc; padding: 0 0 0 6px; font: 13.330px/21px "Liberation Sans", sans-serif; color: #000; }
.field:not(.field-hex) .field-box { padding-left: 3px; }
.field-label { margin-top: 6px; text-align: center; font: 12px/14px "Liberation Sans", sans-serif; color: #222; }
.presets { margin: 7px -12px 0; padding: 14px 0 0 12px; border-top: 1px solid #eee; display: flex; flex-wrap: wrap; gap: 12.500px; }
.pre { width: 20px; height: 20px; border-radius: 3px; box-shadow: inset 0 0 0 1px rgba(0,0,0,.15); }
.p1 { background: #d0021b; } .p2 { background: #f5a623; } .p3 { background: #f8e71c; } .p4 { background: #8b572a; } .p5 { background: #7ed321; } .p6 { background: #417505; } .p7 { background: #bd10e0; }
.p8 { background: #9013fe; } .p9 { background: #4a90e2; } .p10 { background: #50e3c2; } .p11 { background: #b8e986; } .p12 { background: #000; } .p13 { background: #4a4a4a; } .p14 { background: #9b9b9b; } .p15 { background: #fff; }
.name-field { width: 228px; height: 31px; margin-top: 34px; border-bottom: 2px solid #777; font-size: 20.500px; line-height: 24px; color: #8c8c8c; }
.add-color { width: 228px; height: 75px; margin-top: 13px; border: 0; border-radius: 4px; background: #800080; font: 400 18.600px Roboto, sans-serif; color: rgba(0,0,0,.87); box-shadow: 0 3px 1px -2px rgba(0,0,0,.2), 0 2px 2px 0 rgba(0,0,0,.14), 0 1px 5px 0 rgba(0,0,0,.12); }

.content { flex: 1; min-width: 0; display: flex; flex-direction: column; }
.appbar { flex: none; height: 80px; display: flex; align-items: center; background: #f5f5f5; padding-left: 29px; padding-right: 30px; gap: 20px; }
.appbar-title { margin: 0 auto 0 0; font-size: 25.400px; font-weight: 400; color: rgba(0,0,0,.87); }
.grid { flex: 1; min-height: 0; display: grid; grid-template-columns: repeat(5, 1fr); grid-template-rows: repeat(4, 227.500px); }
.tile { display: flex; align-items: flex-end; justify-content: space-between; padding: 0 12px 6px 12px; }
.tile span { font-size: 15.300px; font-weight: 300; line-height: 21px; color: rgba(0,0,0,.6); }
.del { width: 30px; height: 30px; fill: rgba(0,0,0,.5); }
.c-red { background: #f44336; } .c-pink { background: #e91e63; } .c-purple { background: #9c27b0; } .c-dpurple { background: #673ab7; } .c-indigo { background: #3f51b5; }
.c-blue { background: #2196f3; } .c-lblue { background: #03a9f4; } .c-cyan { background: #00bcd4; } .c-teal { background: #009688; } .c-green { background: #4caf50; }
.c-lgreen { background: #8bc34a; } .c-lime { background: #cddc39; } .c-yellow { background: #ddd43a; } .c-amber { background: #ffc107; } .c-orange { background: #ff9800; }
.c-dorange { background: #ff5722; } .c-brown { background: #795548; } .c-grey { background: #9e9e9e; } .c-bgrey { background: #607d8b; }
.hscroll { flex: none; height: 2px; background: linear-gradient(to right, #333 60px, #e8e8e8 60px, #e8e8e8 490px, #333 490px); }

/* dialog */
.backdrop { position: absolute; inset: 0; padding-top: 1px; background: rgba(0,0,0,.5); display: flex; align-items: center; justify-content: center; }
.dialog { width: 444px; height: 614px; background: #fff; border-radius: 4px; box-shadow: 0 11px 15px -7px rgba(0,0,0,.2), 0 24px 38px 3px rgba(0,0,0,.14), 0 9px 46px 8px rgba(0,0,0,.12); display: flex; flex-direction: column; }
.dialog-title { flex: none; height: 80px; margin: 0; padding: 22px 0 0 30px; font-size: 25.400px; font-weight: 400; line-height: 36px; color: rgba(0,0,0,.87); }
.picker { flex: 1; min-height: 0; margin: 0 1px; border: 1px solid #d9d9d9; border-radius: 5px; display: flex; flex-direction: column; }
.anchors { flex: none; height: 58px; display: flex; padding: 0 7px; border-bottom: 1px solid #d9d9d9; }
.anchor { flex: 1; height: 58px; padding-top: 15px; display: flex; justify-content: center; border-bottom: 4px solid transparent; color: #858585; }
.anchor svg { width: 24px; height: 24px; fill: none; stroke: currentColor; stroke-width: 1.800; }
.anchor .fill { fill: currentColor; stroke: none; }
.anchor .sym { font: 700 12.500px "Liberation Sans", sans-serif; fill: currentColor; stroke: none; }
.anchor.on { color: #ae65c5; border-bottom-color: #ae65c5; }
.search { flex: none; height: 38px; margin: 7px 8px 0 7px; border: 1px solid #d9d9d9; border-radius: 5px; display: flex; align-items: center; justify-content: space-between; padding: 0 11px 0 13px; }
.search-ph { font: 20px "Liberation Sans", sans-serif; color: #75808f; }
.search-ic { width: 17px; height: 17px; fill: none; stroke: #777; stroke-width: 1.800; }
.scroll { flex: 1; min-height: 0; display: flex; margin-top: 1px; overflow: hidden; }
.scroll-list { flex: 1; min-width: 0; overflow: hidden; padding-left: 6px; }
.cat { height: 36px; padding-left: 8px; font: 20.500px/35px "Liberation Sans", sans-serif; color: #333; }
.emojis { display: grid; grid-template-columns: repeat(9, 45px); grid-auto-rows: 45px; justify-items: center; align-items: center; }
.em { width: 29px; height: 29px; }
.dol { font: 700 11px "Liberation Sans", sans-serif; fill: #5b3a0a; }
.vbar { flex: none; width: 21px; background: #f1f1f1; display: flex; flex-direction: column; align-items: center; }
.arrow-up { margin-top: 8px; border: 5px solid transparent; border-top: 0; border-bottom: 5px solid #a3a3a3; }
.vthumb { width: 17px; height: 21px; margin-top: 8px; background: #c1c1c1; }
.arrow-down { margin-top: auto; margin-bottom: 9px; border: 5px solid transparent; border-bottom: 0; border-top: 5px solid #505050; }
.preview { flex: none; height: 89px; border-top: 1px solid #d9d9d9; display: flex; align-items: center; padding: 0 0 1px 24px; }
.preview-em { flex: none; width: 44px; height: 46px; margin-right: 16px; }
.preview-text { font: 33px "Liberation Sans", sans-serif; color: #98a3b0; white-space: nowrap; }
.skin { flex: none; width: 22px; height: 22px; margin-left: 10px; border: 1px solid #ddd; border-radius: 50%; display: flex; align-items: center; justify-content: center; }
.skin-dot { width: 15px; height: 15px; border-radius: 50%; background: #ffc93a; }
```
